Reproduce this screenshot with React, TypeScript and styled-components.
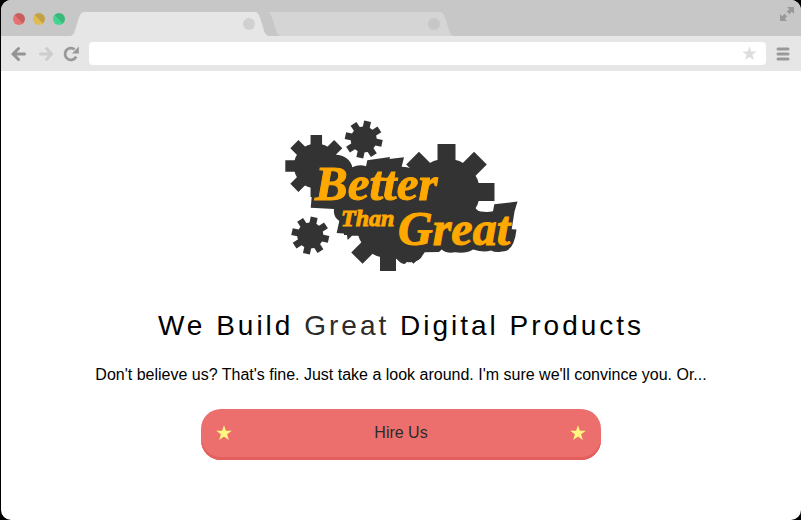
import React from "react";
import styled, { createGlobalStyle } from "styled-components";

const GlobalStyle = createGlobalStyle`
  * { box-sizing: border-box; }
  body {
    margin: 0;
    background: #000;
    font-family: "Liberation Sans", Arial, Helvetica, sans-serif;
  }
`;

const Frame = styled.div`
  display: flex;
  flex-direction: column;
  min-height: 100vh;
  margin-left: 1px;
  border-radius: 10px;
  background: #fff;
  overflow: hidden;
`;

const TitleBar = styled.header`
  display: flex;
  align-items: flex-end;
  height: 36px;
  padding: 0 7px 0 12px;
  background: #c7c7c7;
`;

const WindowControls = styled.div`
  display: flex;
  gap: 8px;
  margin-right: 4px;
  padding-bottom: 11px;
`;

const WindowButton = styled.button<{ $light: string; $dark: string }>`
  width: 12px;
  height: 12px;
  padding: 0;
  border: 0;
  border-radius: 50%;
  background: linear-gradient(45deg, ${(p) => p.$light} 50%, ${(p) => p.$dark} 50%);
`;

const TabStrip = styled.nav`
  display: flex;
  flex: 1;
`;

const Tab = styled.div<{ $active?: boolean }>`
  display: flex;
  width: ${(p) => (p.$active ? "201px" : "188px")};
  margin-left: ${(p) => (p.$active ? "0" : "-3px")};
  height: 24px;
  color: ${(p) => (p.$active ? "#e6e6e6" : "#d5d5d5")};
`;

const TabEdge = styled.svg`
  flex: none;
  width: 15px;
  height: 24px;
  fill: currentColor;
`;

const TabBody = styled.div`
  display: flex;
  flex: 1;
  align-items: center;
  justify-content: flex-end;
  background: currentColor;
`;

const TabClose = styled.button<{ $color: string }>`
  width: 12px;
  height: 12px;
  padding: 0;
  border: 0;
  border-radius: 50%;
  background: ${(p) => p.$color};
`;

const IconButton = styled.button<{ $color: string }>`
  display: flex;
  flex: none;
  padding: 0;
  border: 0;
  background: none;
  color: ${(p) => p.$color};
`;

const ExpandButton = styled(IconButton)`
  align-self: flex-start;
  margin-top: 7px;
`;

const Toolbar = styled.div`
  display: flex;
  align-items: center;
  gap: 10px;
  height: 35px;
  padding: 0 11px 0 10px;
  background: #e6e6e6;
`;

const NavButtons = styled.div`
  display: flex;
  gap: 10px;
`;

const AddressBar = styled.div`
  display: flex;
  flex: 1;
  align-items: center;
  height: 23px;
  padding-right: 9px;
  border-radius: 4px;
  background: #fff;
`;

const AddressInput = styled.input`
  flex: 1;
  min-width: 0;
  height: 100%;
  padding: 0 8px;
  border: 0;
  outline: 0;
  background: transparent;
  font: inherit;
`;

const Page = styled.main`
  display: flex;
  flex: 1;
  flex-direction: column;
  align-items: center;
  padding: 49px 16px 60px;
  text-align: center;
`;

const LogoArt = styled.svg`
  display: block;
  width: 234px;
  height: 152px;
`;

const LogoText = styled.text`
  fill: #ffa800;
  stroke: #ffa800;
  stroke-width: 1px;
  font-family: "Liberation Serif", "Times New Roman", serif;
  font-weight: 700;
  font-style: italic;
`;

const Title = styled.h1`
  margin: 36px 0 0;
  font-size: 28px;
  line-height: 36px;
  font-weight: 400;
  letter-spacing: 3px;
  color: #000;
`;

const Accent = styled.span`
  color: #2b2b2b;
`;

const Lead = styled.p`
  margin: 21px 0 0;
  font-size: 16px;
  line-height: 20px;
  color: #000;
`;

const HireLink = styled.a`
  display: flex;
  align-items: center;
  justify-content: space-between;
  width: 100%;
  max-width: 400px;
  height: 51px;
  margin-top: 24px;
  padding: 0 15px 3px;
  border-radius: 20px;
  background: #ed6f6d;
  box-shadow: inset 0 -3px 0 #e35f5d;
  color: #2b2b2b;
  font-size: 16px;
  text-decoration: none;
`;

function Star({ size, color }: { size: number; color: string }) {
  return (
    <svg width={size} height={size} viewBox="0 0 16 16" fill={color} aria-hidden="true">
      <path d="M8 0.3 9.9 5.8H15.8L11.1 9.3 12.8 15 8 11.6 3.2 15 4.9 9.3 0.2 5.8H6.1Z" />
    </svg>
  );
}

type GearProps = { cx: number; cy: number; body: number; outer: number; tooth: number; turn?: number };

function Gear({ cx, cy, body, outer, tooth, turn = 0 }: GearProps) {
  return (
    <g transform={`translate(${cx} ${cy}) rotate(${turn})`}>
      <circle r={body} />
      {[0, 45, 90, 135].map((a) => (
        <rect key={a} x={-tooth / 2} y={-outer} width={tooth} height={outer * 2} transform={`rotate(${a})`} />
      ))}
    </g>
  );
}

function Logo() {
  return (
    <LogoArt viewBox="284 120 234 152" role="img" aria-label="Better Than Great">
      <g fill="#333">
        <Gear cx={316.3} cy={166} body={22.5} outer={31} tooth={11.5} />
        <Gear cx={363.7} cy={139.5} body={13} outer={18.7} tooth={7} turn={12} />
        <Gear cx={310.3} cy={235.5} body={13} outer={18.7} tooth={7} turn={12} />
        <Gear cx={446.5} cy={192} body={33.5} outer={48} tooth={18} />
        <Gear cx={388} cy={227} body={31} outer={44} tooth={16} />
        <path d="M310.7 207.7 312.3 190 313 165Q322 154 335 154.5 350 156 352.3 167.3 359 164 366 166.3L367.3 160.3 390 157 389.5 159 404 157.3 401.7 166.7 407 167.3 440 176 475 210Q484 213 493 211.3L494.3 204.3 517.5 201.5 514.5 211.5 511.7 229.3 516.5 229.5Q514 252 501.7 251.5 496 253 491 250.5 484 253 473 249.5 466 254 455 252.3 447 254 441.7 249.5L439 252 424 252.3Q420 264 406.7 262 404 267 396.7 259L365 248 361 235.7 352 235.7 347.7 240 346.7 233.7 336.7 233 339.3 221Q333 217 334 209Z" />
      </g>
      <LogoText x="315" y="200" fontSize="49">Better</LogoText>
      <LogoText x="341" y="226" fontSize="24">Than</LogoText>
      <LogoText x="398" y="245" fontSize="48">Great</LogoText>
    </LogoArt>
  );
}

const edgeRise = "M0 24C3.5 24 4.5 22 5.5 20L9.5 7C11 3 12 0 15 0V24Z";
const edgeFall = "M15 24C11.5 24 10.5 22 9.5 20L5.5 7C4 3 3 0 0 0V24Z";
const edgeCut = "M0 0C3 0 4 3 5.5 7L9 18C10 21 11 24 15 24V0Z";

export default function App() {
  return (
    <>
      <GlobalStyle />
      <Frame>
        <TitleBar>
          <WindowControls>
            <WindowButton aria-label="Close window" $light="#e97071" $dark="#c95e5f" />
            <WindowButton aria-label="Minimize window" $light="#dfbb51" $dark="#c1a244" />
            <WindowButton aria-label="Zoom window" $light="#43d58e" $dark="#39b87a" />
          </WindowControls>
          <TabStrip aria-label="Tabs">
            <Tab $active>
              <TabEdge viewBox="0 0 15 24" aria-hidden="true"><path d={edgeRise} /></TabEdge>
              <TabBody><TabClose aria-label="Close current tab" $color="#d1d1d1" /></TabBody>
              <TabEdge viewBox="0 0 15 24" aria-hidden="true"><path d={edgeFall} /></TabEdge>
            </Tab>
            <Tab>
              <TabEdge viewBox="0 0 15 24" aria-hidden="true"><path d={edgeCut} /></TabEdge>
              <TabBody><TabClose aria-label="Close background tab" $color="#c7c7c7" /></TabBody>
              <TabEdge viewBox="0 0 15 24" aria-hidden="true"><path d={edgeFall} /></TabEdge>
            </Tab>
          </TabStrip>
          <ExpandButton aria-label="Full screen" $color="#999">
            <svg width="14" height="14" viewBox="0 0 14 14" fill="currentColor">
              <path d="M7 0H14V7L11.8 4.8 9.4 7.2 6.8 4.6 9.2 2.2ZM0 14V7L2.2 9.2 4.6 6.8 7.2 9.4 4.8 11.8 7 14Z" />
            </svg>
          </ExpandButton>
        </TitleBar>
        <Toolbar>
          <NavButtons>
            <IconButton aria-label="Back" $color="#949494">
              <svg width="16" height="16" viewBox="0 0 16 16" fill="none" stroke="currentColor" strokeWidth="3" strokeLinecap="round">
                <path d="M2 8H13.5M7.5 2.5 2 8 7.5 13.5" />
              </svg>
            </IconButton>
            <IconButton aria-label="Forward" $color="#cdcdcd">
              <svg width="16" height="16" viewBox="0 0 16 16" fill="none" stroke="currentColor" strokeWidth="3" strokeLinecap="round">
                <path d="M3.5 8H14.5M9.5 2.5 14.5 8 9.5 13.5" />
              </svg>
            </IconButton>
            <IconButton aria-label="Reload" $color="#999">
              <svg width="16" height="16" viewBox="0 0 16 16" fill="none">
                <path d="M11.6 3.4A5.9 5.9 0 1 0 13.2 10.6" stroke="currentColor" strokeWidth="2.8" />
                <path d="M15.8 .5V7.6H9Z" fill="currentColor" />
              </svg>
            </IconButton>
          </NavButtons>
          <AddressBar>
            <AddressInput type="text" aria-label="Address" />
            <IconButton aria-label="Bookmark this page" $color="#dedede">
              <Star size={15} color="currentColor" />
            </IconButton>
          </AddressBar>
          <IconButton aria-label="Menu" $color="#999">
            <svg width="14" height="14" viewBox="0 0 14 14" stroke="currentColor" strokeWidth="3" strokeLinecap="round">
              <path d="M2 2H12M2 7H12M2 12H12" />
            </svg>
          </IconButton>
        </Toolbar>
        <Page>
          <Logo />
          <Title>We Build <Accent>Great</Accent> Digital Products</Title>
          <Lead>Don't believe us? That's fine. Just take a look around. I'm sure we'll convince you. Or...</Lead>
          <HireLink href="#hire">
            <Star size={16} color="#fff982" />
            Hire Us
            <Star size={16} color="#fff982" />
          </HireLink>
        </Page>
      </Frame>
    </>
  );
}
